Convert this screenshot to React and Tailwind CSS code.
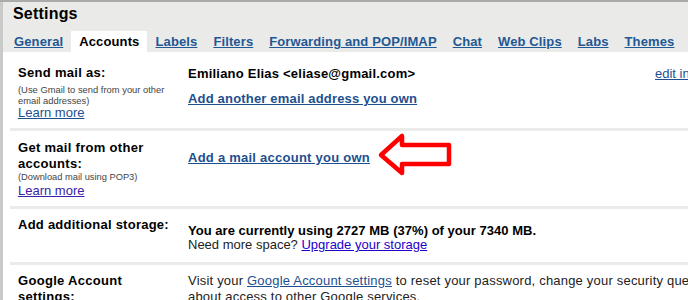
import React from 'react';

const tabs = ['General', 'Accounts', 'Labels', 'Filters', 'Forwarding and POP/IMAP', 'Chat', 'Web Clips', 'Labs', 'Themes'];

function RedArrow() {
  return (
    <svg width="80" height="46" viewBox="0 0 80 46" className="absolute left-[365px] top-[1px]">
      <polygon
        points="6,23 27,4 27,13 74,13 74,32 27,32 27,41"
        fill="none"
        stroke="#ff0000"
        strokeWidth="4.5"
        strokeLinejoin="round"
      />
    </svg>
  );
}

export default function App() {
  return (
    <div className="w-[688px] h-[300px] overflow-hidden bg-white flex flex-col font-['Liberation_Sans',Arial,sans-serif] text-[#111]">
      <div className="h-[2px] bg-[#ababab] shrink-0" />
      <div className="flex flex-1">
        <div className="w-[3px] bg-[#c9c9c9] shrink-0" />
        <div className="flex-1 flex flex-col min-w-0">
          {/* header */}
          <div className="bg-[#eaeae8] pt-[3px]">
            <div className="pl-[10px] text-[16px] leading-[18px] font-bold text-black tracking-[0.2px]">Settings</div>
            <div className="flex mt-[8px] pl-[3px] whitespace-nowrap tracking-[0.12px]">
              {tabs.map((t) =>
                t === 'Accounts' ? (
                  <span key={t} className="bg-white px-[8px] pt-[3px] pb-[3px] text-[13px] leading-[15px] font-bold text-black">
                    {t}
                  </span>
                ) : (
                  <a key={t} className="px-[8px] pt-[3px] pb-[3px] text-[13px] leading-[15px] font-bold text-[#1f5895] underline">
                    {t}
                  </a>
                )
              )}
            </div>
          </div>

          {/* rows */}
          <div className="ml-[7px]">
            <div className="flex pt-[13px] pb-[8px] border-b-[3px] border-[#ebebeb]">
              <div className="w-[178px] shrink-0 pl-[8px]">
                <div className="text-[13px] leading-[16px] font-bold text-black tracking-[0.3px]">Send mail as:</div>
                <div className="mt-[3px] text-[9.4px] leading-[11px] text-[#444]">
                  (Use Gmail to send from your other
                  <br />
                  email addresses)
                </div>
                <a className="block text-[13px] leading-[14px] text-[#1d4f8f] underline">Learn more</a>
              </div>
              <div className="flex-1 min-w-0 whitespace-nowrap">
                <div className="grid grid-cols-[467px_auto] text-[13px] leading-[16px] pt-[1px]">
                  <span className="font-bold text-black tracking-[0.22px]">Emiliano Elias &lt;eliase@gmail.com&gt;</span>
                  <a className="text-[#1d4f8f] underline">edit info</a>
                </div>
                <a className="block mt-[9px] text-[13px] leading-[16px] font-bold text-[#1d4f8f] underline tracking-[0.18px]">
                  Add another email address you own
                </a>
              </div>
            </div>

            <div className="relative flex pt-[9px] pb-[8px] border-b-[3px] border-[#ebebeb]">
              <div className="w-[178px] shrink-0 pl-[8px]">
                <div className="text-[13px] leading-[16px] font-bold text-black tracking-[0.3px]">
                  Get mail from other
                  <br />
                  accounts:
                </div>
                <div className="text-[9.3px] leading-[11px] text-[#444]">(Download mail using POP3)</div>
                <a className="block mt-[1px] text-[13px] leading-[14px] text-[#3a22a8] underline">Learn more</a>
              </div>
              <div className="flex-1 min-w-0 whitespace-nowrap pt-[5px]">
                <a className="text-[13px] leading-[16px] font-bold text-[#1d4f8f] underline tracking-[0.25px]">Add a mail account you own</a>
              </div>
              <RedArrow />
            </div>

            <div className="flex pt-[8px] pb-[10px] border-b-[3px] border-[#ebebeb]">
              <div className="w-[178px] shrink-0 pl-[8px] text-[13px] leading-[16px] font-bold text-black tracking-[0.25px]">
                Add additional storage:
              </div>
              <div className="flex-1 min-w-0 whitespace-nowrap pt-[7px] text-[13px] leading-[14px]">
                <div className="font-bold text-black tracking-[0.03px]">You are currently using 2727 MB (37%) of your 7340 MB.</div>
                <div className="text-[#222]">
                  Need more space? <a className="text-[#2200cc] underline">Upgrade your storage</a>
                </div>
              </div>
            </div>

            <div className="flex pt-[8px]">
              <div className="w-[178px] shrink-0 pl-[8px] text-[13px] leading-[16px] font-bold text-black tracking-[0.3px]">
                Google Account
                <br />
                settings:
              </div>
              <div className="flex-1 min-w-0 whitespace-nowrap text-[13px] leading-[16px] text-[#222] tracking-[0.2px]">
                Visit your <a className="text-[#1d4f8f] underline">Google Account settings</a> to reset your password, change your security question, or learn
                <br />
                about access to other Google services.
              </div>
            </div>
          </div>
        </div>
      </div>
    </div>
  );
}
